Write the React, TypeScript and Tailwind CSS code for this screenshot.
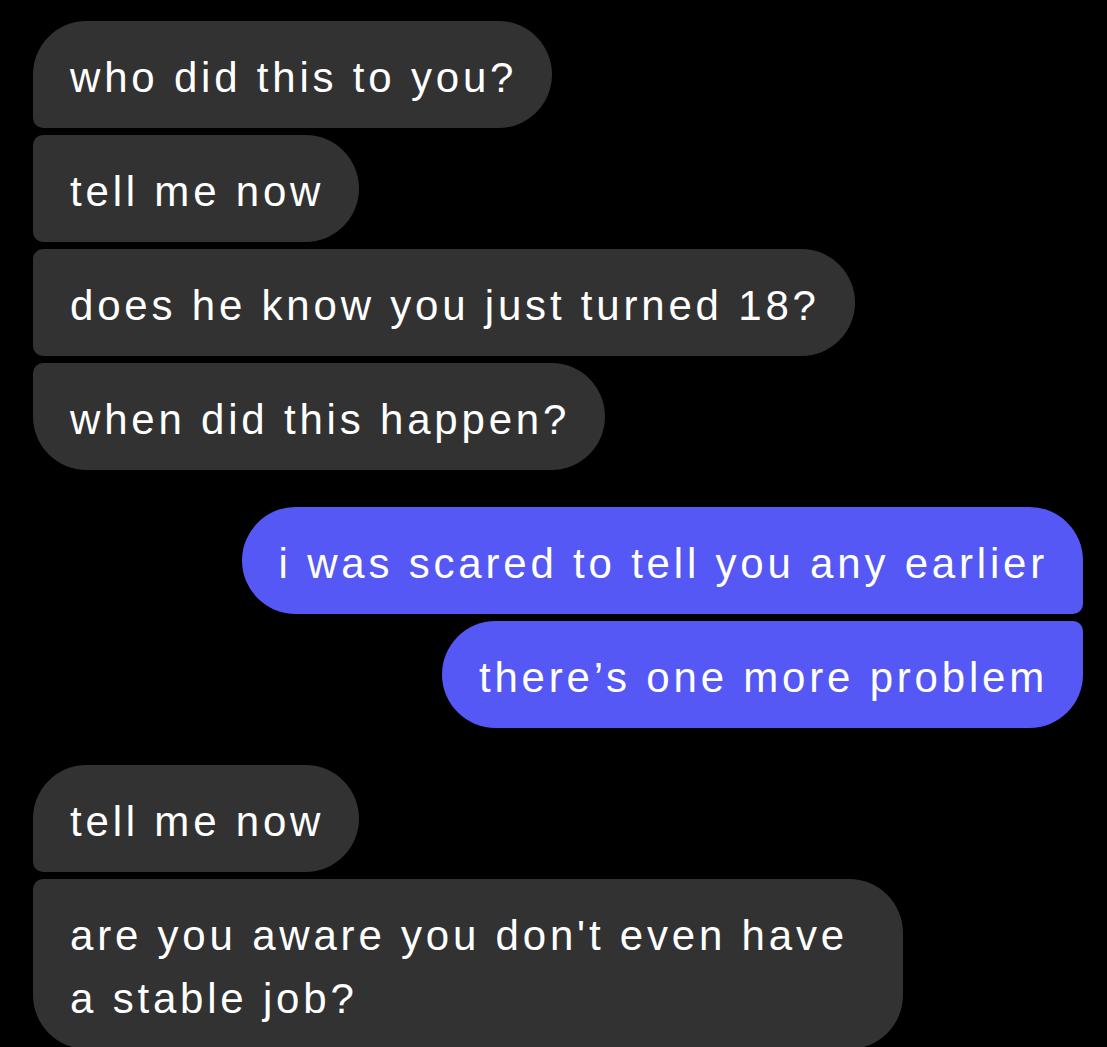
type Msg = { text: string; mine?: boolean; shape: string; gap: string };

const messages: Msg[] = [
  { text: 'who did this to you?', shape: 'rounded-[54px] rounded-bl-[10px]', gap: 'mt-[21px]' },
  { text: 'tell me now', shape: 'rounded-[54px] rounded-tl-[10px] rounded-bl-[10px]', gap: 'mt-[7px]' },
  { text: 'does he know you just turned 18?', shape: 'rounded-[54px] rounded-tl-[10px] rounded-bl-[10px]', gap: 'mt-[7px]' },
  { text: 'when did this happen?', shape: 'rounded-[54px] rounded-tl-[10px]', gap: 'mt-[7px]' },
  { text: 'i was scared to tell you any earlier', mine: true, shape: 'rounded-[54px] rounded-br-[10px]', gap: 'mt-[37px]' },
  { text: 'there’s one more problem', mine: true, shape: 'rounded-[54px] rounded-tr-[10px]', gap: 'mt-[7px]' },
  { text: 'tell me now', shape: 'rounded-[54px] rounded-bl-[10px]', gap: 'mt-[37px]' },
  { text: "are you aware you don't even have a stable job?", shape: 'rounded-[54px] rounded-tl-[10px]', gap: 'mt-[7px]' },
];

function Bubble({ msg }: { msg: Msg }) {
  return (
    <div className={`flex ${msg.mine ? 'justify-end' : 'justify-start'} ${msg.gap}`}>
      <div
        className={`${msg.shape} ${
          msg.mine ? 'bg-[#5558f4]' : 'bg-[#323232]'
        } max-w-[870px] pl-[37px] pr-[35px] pt-[25px] pb-[19px] text-[42px] leading-[63px] tracking-[3.8px] text-white`}
      >
        {msg.text}
      </div>
    </div>
  );
}

export default function App() {
  return (
    <div
      className="min-h-screen w-full overflow-hidden bg-black pl-[33px] pr-[24px] pb-10"
      style={{ fontFamily: '"Liberation Sans", Arial, sans-serif' }}
    >
      {messages.map((m, i) => (
        <Bubble key={'msg_' + i} msg={m} />
      ))}
    </div>
  );
}
